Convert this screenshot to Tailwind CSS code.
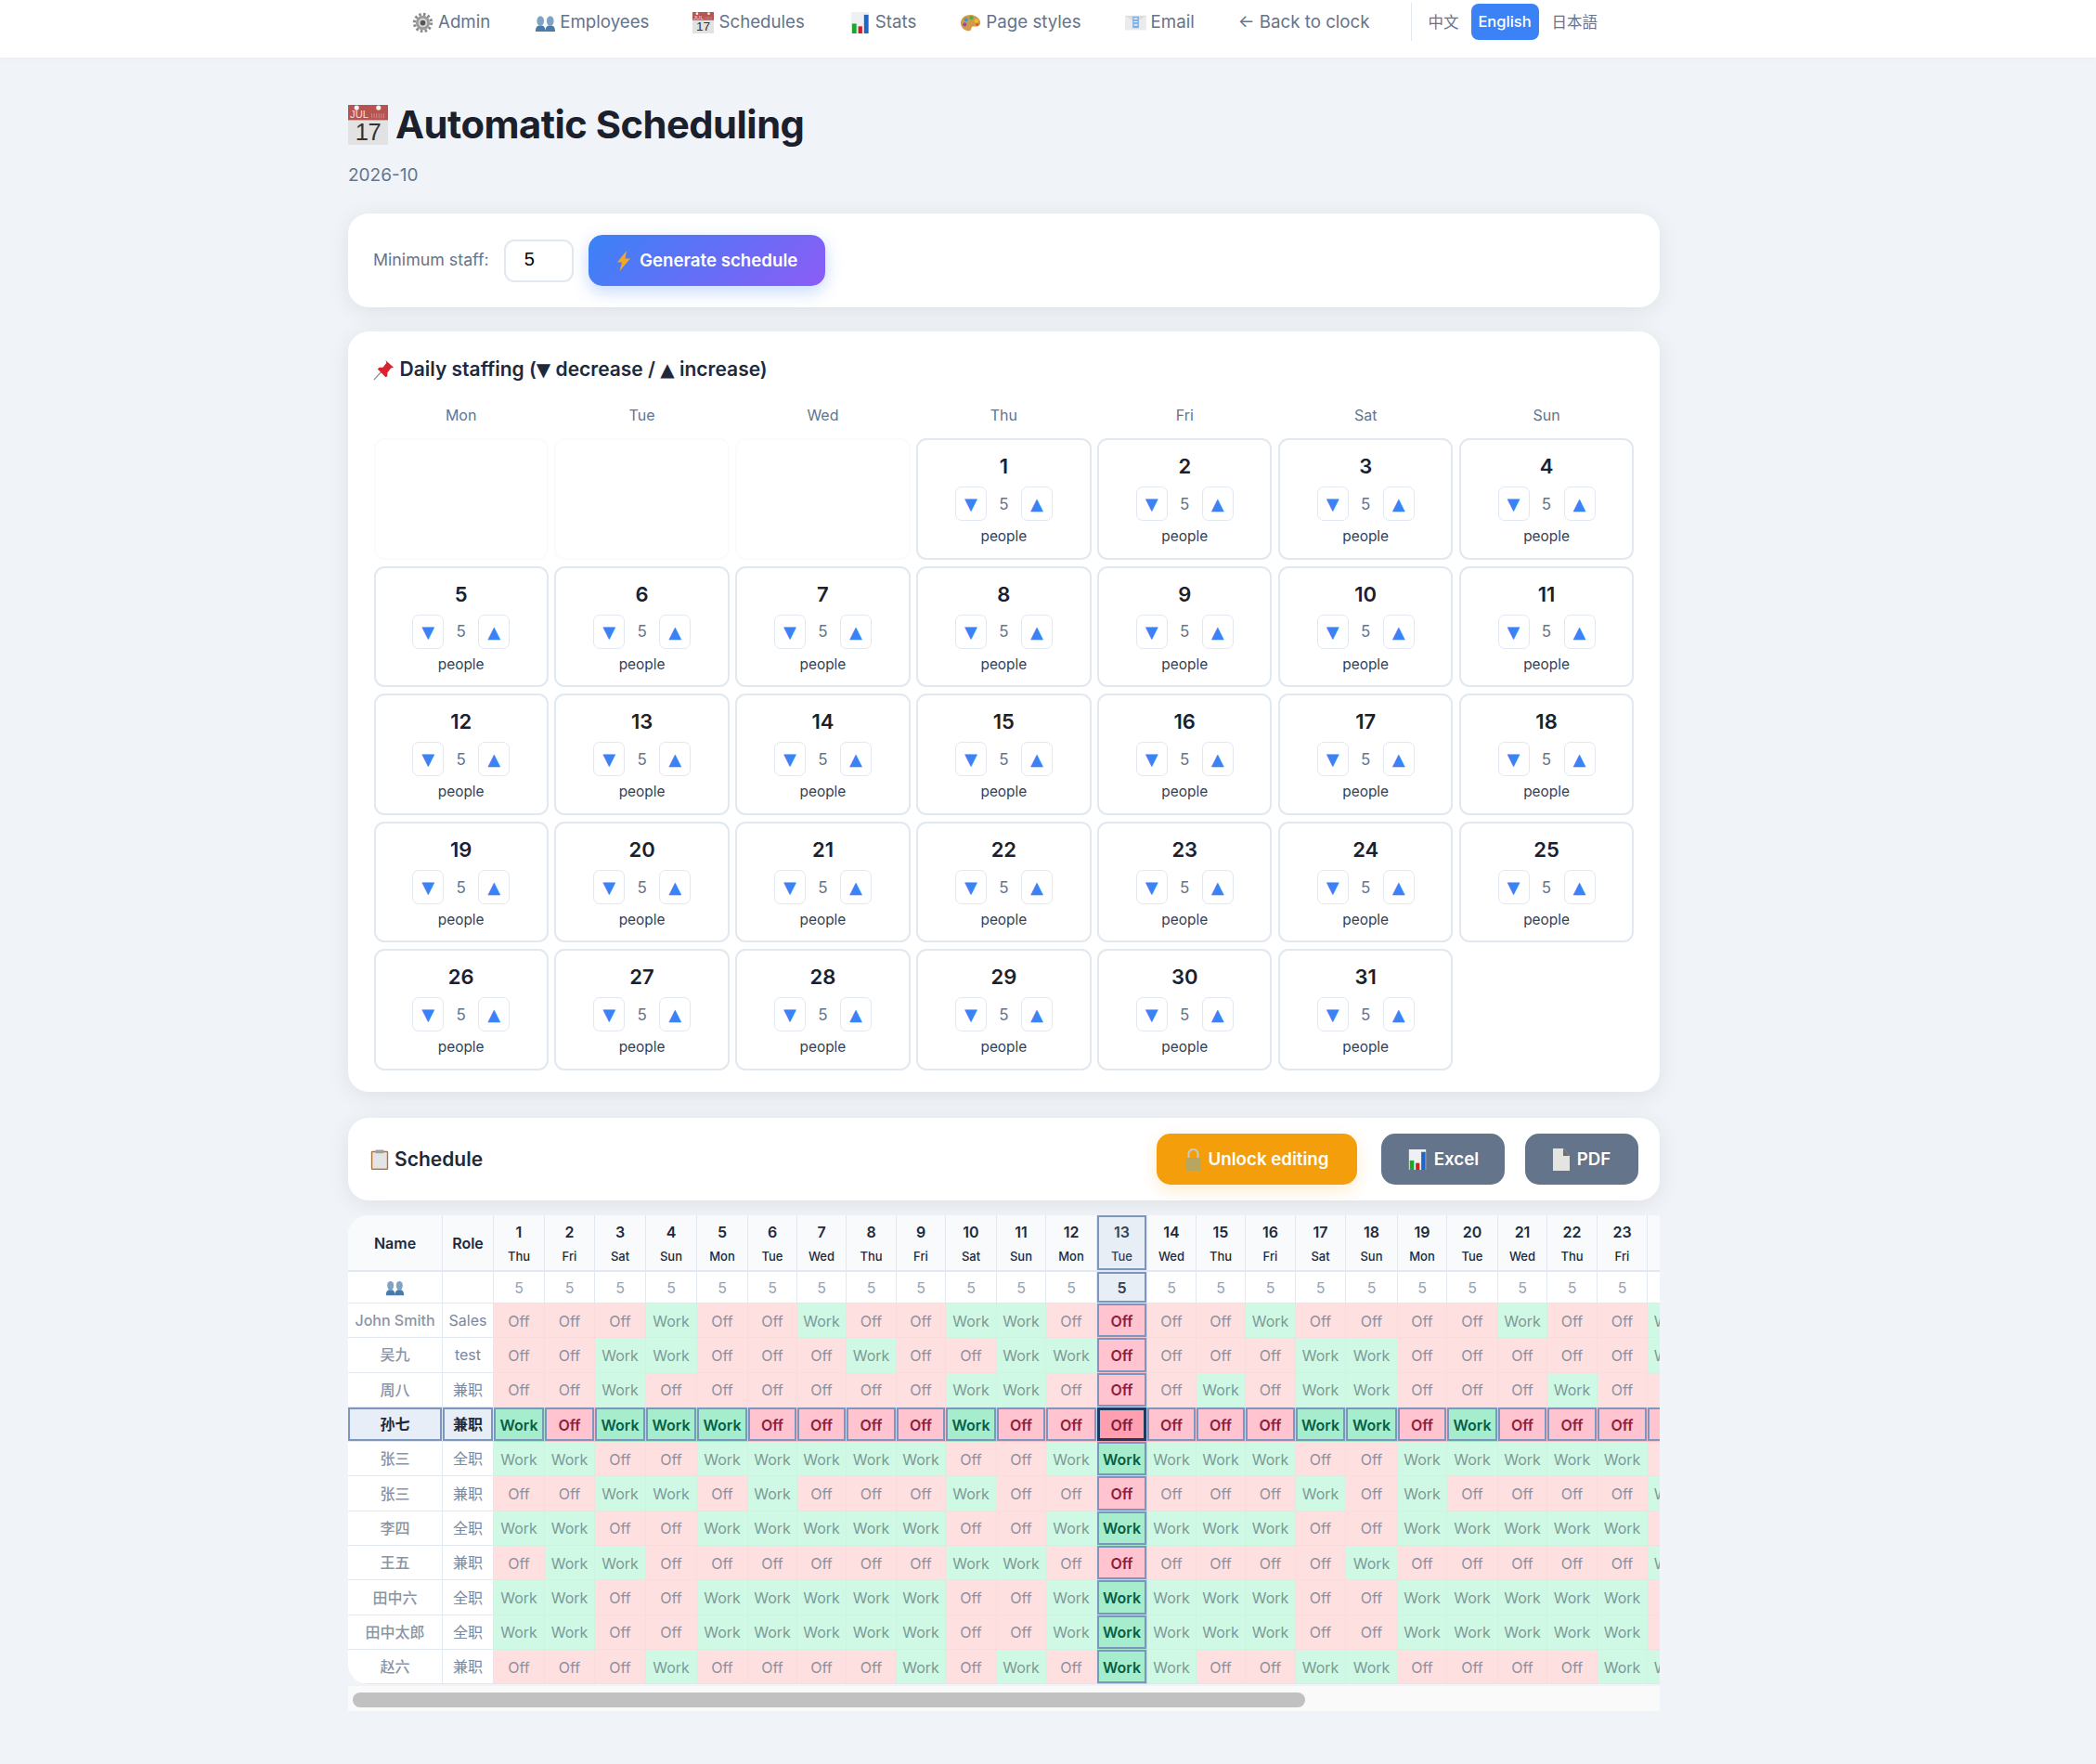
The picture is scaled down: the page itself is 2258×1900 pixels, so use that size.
<!DOCTYPE html>
<html lang="en">
<head>
  <meta charset="UTF-8">
  <title>Automatic Scheduling</title>
  <script src="https://cdn.jsdelivr.net/npm/@tailwindcss/browser@4"></script>
</head>
<body class="bg-[#f0f4f8] font-['Inter','Noto_Sans_CJK_SC',sans-serif] text-[#1e293b]">
  <!-- icons -->
  <svg class="hidden">
    <symbol id="i-gear" viewBox="0 0 24 24">
      <circle cx="12" cy="12" r="9.500" fill="none" stroke="#8a8a8a" stroke-width="3.400" stroke-dasharray="2.600 2.400"/>
      <circle cx="12" cy="12" r="8" fill="#9b9b9b"/><circle cx="12" cy="12" r="5" fill="#d8d8d8"/><circle cx="12" cy="12" r="3" fill="#555"/>
    </symbol>
    <symbol id="i-people" viewBox="0 0 24 24">
      <path d="M1 22c0-5 1.500-7 5.500-7S12 17 12 22zM12 22c0-5 1.500-7 5.500-7s5.500 2 5.500 7z" fill="#4a7ba8"/>
      <ellipse cx="6.500" cy="10" rx="4" ry="5.500" fill="#7fa3c4"/><ellipse cx="17.500" cy="10" rx="4" ry="5.500" fill="#7fa3c4"/>
    </symbol>
    <symbol id="i-cal" viewBox="0 0 42 42">
      <rect width="42" height="42" fill="#e2e2e2"/><rect width="42" height="16" fill="#b85450"/>
      <circle cx="9" cy="3" r="2.500" fill="#f4f4f4"/><circle cx="32" cy="3" r="2.500" fill="#f4f4f4"/>
      <path d="M25 9v5M27.500 9v5M30 9v5M32.500 9v5M35 9v5M37.500 9v5" stroke="#cf8a86" stroke-width="1"/>
      <text x="2" y="14" font-size="11" font-weight="400" letter-spacing="0" fill="#f6dede" font-family="Liberation Sans">JUL</text>
      <text x="21" y="37" text-anchor="middle" font-size="25" font-weight="400" fill="#333" font-family="Liberation Sans">17</text>
    </symbol>
    <symbol id="i-chart" viewBox="0 0 24 24">
      <rect x="2" width="20" height="24" fill="#eef0f3"/><rect x="3" y="13" width="5" height="11" fill="#18a832"/><rect x="10" y="16" width="4.500" height="8" fill="#d02020"/><rect x="16.500" y="3" width="5" height="21" fill="#1f66c8"/>
    </symbol>
    <symbol id="i-palette" viewBox="0 0 24 24">
      <path d="M12 3C5 3 1 7.500 1 12.500S6 22 11 21c3-.5 1-3.500 3-4.500s8 1 9-3.500S19 3 12 3z" fill="#d49a4a"/>
      <circle cx="7" cy="8.500" r="2.200" fill="#2f9fd8"/><circle cx="13" cy="6.500" r="2.200" fill="#3cb54a"/><circle cx="18.500" cy="10" r="2.200" fill="#f2c21a"/><circle cx="5.500" cy="14" r="2.200" fill="#8a4fc0"/><circle cx="19.500" cy="14" r="1.500" fill="#e0502a"/>
    </symbol>
    <symbol id="i-mail" viewBox="0 0 24 24">
      <rect y="4" width="24" height="16" fill="#dcdcdc"/><path d="M0 4l12 8 12-8v16H0z" fill="#ebebeb"/><rect x="8.500" y="5" width="7" height="13" fill="#7eb0e8"/>
      <path d="M10 7.500h4M10 11h4M10 14.500h4" stroke="#fff" stroke-width="1.200"/>
    </symbol>
    <symbol id="i-bolt" viewBox="0 0 16 22"><path d="M11 0L1 12.500h5L3.500 22 15 8.500H9.500z" fill="#f5a623"/></symbol>
    <symbol id="i-pin" viewBox="0 0 24 24">
      <path d="M1 23l8-9" stroke="#9a9a9a" stroke-width="1.500"/>
      <path d="M14 1l9 8-3 1-4 5 0 4-2 1-9-9 2-2 4 0 4-5z" fill="#d9232e"/>
    </symbol>
    <symbol id="i-clip" viewBox="0 0 24 24">
      <rect x="2" y="2" width="20" height="22" rx="1.500" fill="#a8743c"/><rect x="3.500" y="3.500" width="17" height="19" fill="#e4e4e4"/><rect x="7" y="0.500" width="10" height="4" rx="1" fill="#9aa0a6"/>
    </symbol>
    <symbol id="i-lock" viewBox="0 0 16 24">
      <path d="M3 11V6a5 5 0 0 1 10 0v5" fill="none" stroke="#c9c9c0" stroke-width="2.200"/><rect y="10" width="16" height="14" rx="1.500" fill="#b8a560"/>
    </symbol>
    <symbol id="i-doc" viewBox="0 0 18 24">
      <path d="M0 0h11l7 8v16H0z" fill="#e4e4e0"/><path d="M11 0l7 8h-7z" fill="#6f6f6f"/>
    </symbol>
  </svg>

  <nav class="h-[62px] bg-white shadow-[0_1px_6px_rgba(0,0,0,0.03)]">
    <div class="ml-[375px] w-[1413px] h-full flex items-center justify-center text-[18.7px] text-[#64748b] pb-[13px] pl-[2px]">
      <a class="flex items-center gap-[5px]"><svg class="w-[23px] h-[23px]"><use href="#i-gear"/></svg>Admin</a>
      <a class="flex items-center gap-[4px] ml-[48px]"><svg class="w-[23px] h-[23px]"><use href="#i-people"/></svg>Employees</a>
      <a class="flex items-center gap-[5px] ml-[47px]"><svg class="w-[23px] h-[23px]"><use href="#i-cal"/></svg>Schedules</a>
      <a class="flex items-center gap-[5px] ml-[48px]"><svg class="w-[23px] h-[23px]"><use href="#i-chart"/></svg>Stats</a>
      <a class="flex items-center gap-[5px] ml-[47px]"><svg class="w-[23px] h-[23px]"><use href="#i-palette"/></svg>Page styles</a>
      <a class="flex items-center gap-[5px] ml-[47px]"><svg class="w-[23px] h-[23px]"><use href="#i-mail"/></svg>Email</a>
      <a class="ml-[47px]">← Back to clock</a>
      <div class="w-px h-[41px] mb-[2px] bg-[#e2e8f0] ml-[44px]"></div>
      <a class="ml-[18px] text-[16.5px]">中文</a>
      <a class="ml-[13px] w-[73px] h-[39px] mb-[2px] rounded-[8px] bg-[#3b82f6] text-white text-[16.5px] font-medium flex items-center justify-center">English</a>
      <a class="ml-[14px] text-[16.5px]">日本語</a>
    </div>
  </nav>

  <main class="ml-[375px] w-[1413px]">
    <h1 class="mt-[46px] h-[52px] flex items-center gap-[8px] text-[41.7px] font-bold text-[#1a202c] tracking-[-0.5px]">
      <svg class="w-[43px] h-[43px] shrink-0"><use href="#i-cal"/></svg>Automatic Scheduling
    </h1>
    <p class="mt-[14px] h-[28px] leading-[30px] text-[19px] text-[#64748b]">2026-10</p>

    <section class="mt-[28px] h-[101px] bg-white rounded-[22px] shadow-[0_4px_24px_rgba(0,0,0,0.08)] px-[27px] flex items-center">
      <label class="text-[17.8px] text-[#64748b]">Minimum staff:</label>
      <input value="5" class="ml-[16px] w-[75px] h-[46px] border-2 border-[#e2e8f0] rounded-[11px] pl-[20px] pb-[3px] text-[20px] text-black font-['Liberation_Sans']">
      <button class="ml-[16px] w-[255px] h-[55px] rounded-[15px] bg-linear-[135deg,#3b82f6,#8b5cf6] text-white text-[18.7px] font-semibold flex items-center justify-center gap-[8px] pt-[1px] shadow-[0_6px_18px_rgba(59,130,246,0.3)]">
        <svg class="w-[18px] h-[22px]"><use href="#i-bolt"/></svg>Generate schedule
      </button>
    </section>

    <section class="mt-[26px] h-[819px] bg-white rounded-[22px] shadow-[0_4px_24px_rgba(0,0,0,0.08)] pl-[27.5px] pr-[27.8px] pt-[26px]">
      <h2 class="h-[30px] flex items-center text-[21px] font-semibold">
        <svg class="w-[23px] h-[23px] -ml-px mr-[6px]"><use href="#i-pin"/></svg>Daily staffing (<span class="font-['DejaVu_Sans'] text-[20px]">▼</span>&nbsp;decrease /&nbsp;<span class="font-['DejaVu_Sans'] text-[20px]">▲</span>&nbsp;increase)
      </h2>
      <div class="mt-[22px] grid grid-cols-7 gap-x-[6.6px] text-center text-[16px] leading-[24px] text-[#64748b]">
        <div>Mon</div><div>Tue</div><div>Wed</div><div>Thu</div><div>Fri</div><div>Sat</div><div>Sun</div>
      </div>
      <div id="days" class="mt-[13px] grid grid-cols-7 gap-x-[6.6px] gap-y-[7px]"></div>
    </section>

    <section class="mt-[28px] h-[89px] bg-white rounded-[22px] shadow-[0_4px_24px_rgba(0,0,0,0.08)] pl-[23px] pr-[23px] flex items-center">
      <h2 class="flex items-center gap-[5px] text-[21px] font-semibold"><svg class="w-[22px] h-[24px]"><use href="#i-clip"/></svg>Schedule</h2>
      <button class="ml-auto w-[216px] h-[55px] rounded-[15px] bg-[#f59e0b] text-white text-[18.7px] font-semibold flex items-center justify-center gap-[8px] pt-[1px] shadow-[0_6px_18px_rgba(245,158,11,0.2)]"><svg class="w-[17px] h-[24px]"><use href="#i-lock"/></svg>Unlock editing</button>
      <button class="ml-[26px] w-[133px] h-[55px] rounded-[15px] bg-[#64748b] text-white text-[18.7px] font-semibold flex items-center justify-center gap-[7px] pt-[1px]"><svg class="w-[22px] h-[24px]"><use href="#i-chart"/></svg>Excel</button>
      <button class="ml-[22px] w-[122px] h-[55px] rounded-[15px] bg-[#64748b] text-white text-[18.7px] font-semibold flex items-center justify-center gap-[8px] pt-[1px]"><svg class="w-[18px] h-[24px]"><use href="#i-doc"/></svg>PDF</button>
    </section>

    <div class="mt-[16px] rounded-tl-[22px] rounded-bl-[22px] overflow-hidden bg-white">
      <table id="sched" class="w-[1454px] table-fixed border-separate border-spacing-0 text-center text-[16px]"></table>
    </div>
    <!-- scrollbar -->
    <div class="mt-[2px] h-[27px] bg-[#fafafa] pt-[7px] pl-[5px]">
      <div class="h-[16px] w-[1026px] rounded-full bg-[#c1c1c1]"></div>
    </div>
  </main>

  <script>
    // staffing calendar, Oct 2026 starts on a Thursday
    const dayBox = document.getElementById("days");
    let dayHtml = "";
    for (let i = 0; i < 3; i++) {
      dayHtml += '<div class="h-[130.6px] border-2 border-[#fbfbfc] rounded-[11px]"></div>';
    }
    for (let d = 1; d <= 31; d++) {
      dayHtml += `<div class="h-[130.6px] border-2 border-[#e2e8f0] rounded-[11px] flex flex-col items-center pt-[14px]">
        <div class="h-[28px] leading-[28px] text-[22px] font-semibold text-[#1a202c]">${d}</div>
        <div class="mt-[8px] flex items-center">
          <button class="w-[34px] h-[37px] border border-[#e2e8f0] rounded-[7px] text-[#3b82f6] text-[18px] font-['DejaVu_Sans']">▼</button>
          <span class="w-[37px] pt-[2px] text-center text-[17px] text-[#64748b]">5</span>
          <button class="w-[34px] h-[37px] border border-[#e2e8f0] rounded-[7px] text-[#3b82f6] text-[18px] font-['DejaVu_Sans']">▲</button>
        </div>
        <div class="mt-[7px] h-[20px] leading-[20px] text-[15.4px] text-[#334155]">people</div>
      </div>`;
    }
    dayBox.innerHTML = dayHtml;

    // schedule table
    const widths = [55,54,55,55,55,53,53,54,53,55,53,55,54,53,53,54,54,56,53,55,53,54,54,54];
    const weekdays = ["Thu","Fri","Sat","Sun","Mon","Tue","Wed"];
    const hiDay = 13, hiRow = 3;
    const rows = [
      ["John Smith","Sales","OOOWOOWOOWWOOOOWOOOOWOOW"],
      ["吴九","test","OOWWOOOWOOWWOOOOWWOOOOOW"],
      ["周八","兼职","OOWOOOOOOWWOOOWOWWOOOWOO"],
      ["孙七","兼职","WOWWWOOOOWOOOOOOWWOWOOOO"],
      ["张三","全职","WWOOWWWWWOOWWWWWOOWWWWWO"],
      ["张三","兼职","OOWWOWOOOWOOOOOOWOWOOOOW"],
      ["李四","全职","WWOOWWWWWOOWWWWWOOWWWWWO"],
      ["王五","兼职","OWWOOOOOOWWOOOOOOWOOOOOW"],
      ["田中六","全职","WWOOWWWWWOOWWWWWOOWWWWWO"],
      ["田中太郎","全职","WWOOWWWWWOOWWWWWOOWWWWWO"],
      ["赵六","兼职","OOOWOOOOWOWOWWOOWWOOOOWW"],
    ];

    function cellClass(isWork, inRow, inCol) {
      const base = "border-b border-r border-black/[.015] p-0 pt-[1px] ";
      if (inRow && inCol) return base + "font-semibold bg-[#ff9fb0] text-[#7f1d3d] shadow-[inset_0_0_0_3px_#1e3a5f]";
      if (inRow || inCol) {
        return base + "font-semibold shadow-[inset_0_0_0_2px_#7c96bd] " +
          (isWork ? "bg-[#a5edcd] text-[#065f46]" : "bg-[#ffc4cf] text-[#8f1d3d]");
      }
      return base + (isWork ? "bg-[#cff9e4] text-[#7c9a98]" : "bg-[#ffe0e1] text-[#8d909e]");
    }

    let html = "<colgroup><col style='width:102px'><col style='width:55px'>" +
      widths.map(w => `<col style="width:${w}px">`).join("") + "</colgroup>";

    html += `<tr class="h-[61px] bg-[#f8fafc]">
      <th class="border-b-2 border-r border-[#e2e8f0] font-semibold">Name</th>
      <th class="border-b-2 border-r border-[#e2e8f0] font-semibold">Role</th>`;
    widths.forEach((w, i) => {
      const day = i + 1;
      const hi = day === hiDay;
      html += `<th class="border-b-2 border-r border-[#e2e8f0] p-0 ${hi ? "bg-[#e8eef6] shadow-[inset_0_0_0_2px_#7c96bd] text-[#334155]" : ""}">
        <div class="text-[16px] leading-[20px] font-semibold pt-[1px]">${day}</div>
        <div class="text-[13px] leading-[18px] font-medium mt-[7px]">${weekdays[i % 7]}</div></th>`;
    });
    html += "</tr>";

    html += `<tr class="h-[34px] bg-white">
      <td class="border-b border-r border-[#e2e8f0]"><svg class="w-[21px] h-[21px] mx-auto"><use href="#i-people"/></svg></td>
      <td class="border-b border-r border-[#e2e8f0]"></td>`;
    widths.forEach((w, i) => {
      const hi = i + 1 === hiDay;
      html += `<td class="border-b border-r border-[#e2e8f0] ${hi ? "bg-[#e8eef6] shadow-[inset_0_0_0_2px_#7c96bd] font-semibold text-[#334155]" : "text-[#94a3b8]"}">5</td>`;
    });
    html += "</tr>";

    rows.forEach((row, r) => {
      const inRow = r === hiRow;
      const nameCls = inRow
        ? "bg-[#e8eef8] shadow-[inset_0_0_0_2px_#7c96bd] font-semibold text-[#1e293b]"
        : "text-[#8a94a6] font-medium";
      const roleCls = inRow
        ? "bg-[#e8eef8] shadow-[inset_0_0_0_2px_#7c96bd] font-semibold text-[#1e293b]"
        : "text-[#7a88a0]";
      html += `<tr class="h-[37.3px]">
        <td class="border-b border-r border-[#e2e8f0] p-0 whitespace-nowrap ${nameCls}">${row[0]}</td>
        <td class="border-b border-r border-[#e2e8f0] p-0 ${roleCls}">${row[1]}</td>`;
      widths.forEach((w, i) => {
        const isWork = row[2][i] === "W";
        html += `<td class="${cellClass(isWork, inRow, i + 1 === hiDay)}">${isWork ? "Work" : "Off"}</td>`;
      });
      html += "</tr>";
    });
    document.getElementById("sched").innerHTML = html;
  </script>
</body>
</html>
